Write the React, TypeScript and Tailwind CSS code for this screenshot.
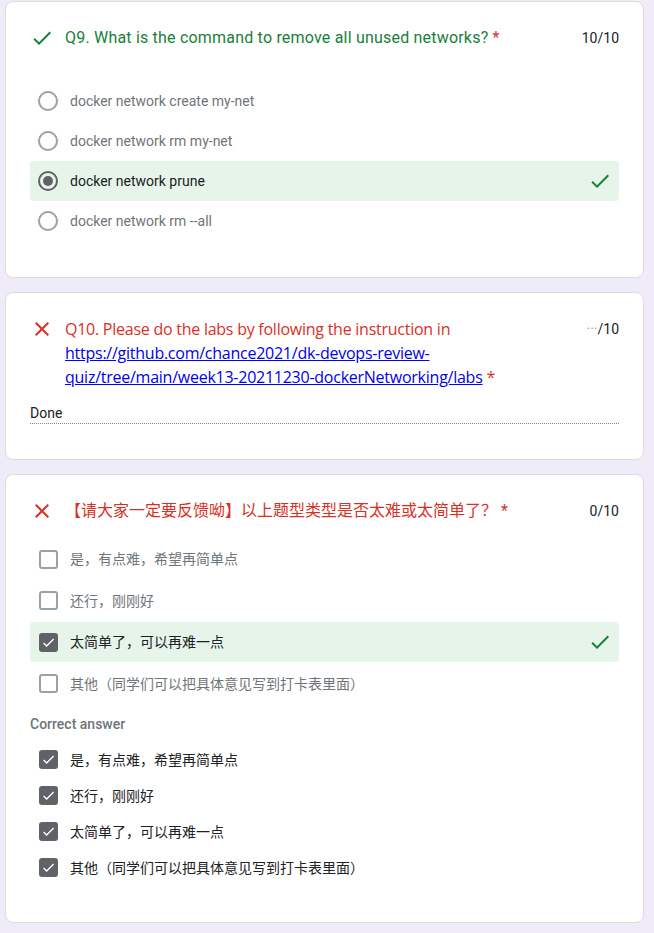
import { ReactNode } from 'react'

const font = { fontFamily: 'Roboto, "Noto Sans CJK SC", sans-serif' }

function CheckIcon({ className }: { className?: string }) {
  return (
    <svg viewBox="0 0 24 24" className={className} fill="currentColor">
      <path d="M9 16.17L4.83 12l-1.42 1.41L9 19 21 7l-1.41-1.41z" />
    </svg>
  )
}

function CloseIcon({ className }: { className?: string }) {
  return (
    <svg viewBox="0 0 24 24" className={className} fill="currentColor">
      <path d="M19 6.41L17.59 5 12 10.59 6.41 5 5 6.41 10.59 12 5 17.59 6.41 19 12 13.41 17.59 19 19 17.59 13.41 12z" />
    </svg>
  )
}

function Radio({ checked }: { checked?: boolean }) {
  return (
    <span
      className={`flex h-5 w-5 shrink-0 items-center justify-center rounded-full border-2 ${
        checked ? 'border-[#5f6368]' : 'border-[#9aa0a6]'
      }`}
    >
      {checked && <span className="h-[10px] w-[10px] rounded-full bg-[#5f6368]" />}
    </span>
  )
}

function Checkbox({ checked }: { checked?: boolean }) {
  if (checked) {
    return (
      <span className="flex h-[19px] w-[19px] shrink-0 items-center justify-center rounded-[3px] bg-[#5f6368]">
        <CheckIcon className="h-[15px] w-[15px] text-white" />
      </span>
    )
  }
  return <span className="h-[19px] w-[19px] shrink-0 rounded-[3px] border-2 border-[#9aa0a6]" />
}

function Option({ control, label, selected }: { control: ReactNode; label: string; selected?: boolean }) {
  return (
    <div className={`flex h-10 items-center rounded-[4px] pl-2 pr-[7px] ${selected ? 'bg-[#e6f4ea]' : ''}`}>
      <span className="flex w-5 justify-center">{control}</span>
      <span className={`ml-3 flex-1 text-sm ${selected ? 'text-[#202124]' : 'text-[#70757a]'}`}>{label}</span>
      {selected && <CheckIcon className="h-6 w-6 text-[#188038]" />}
    </div>
  )
}

function Card({ children }: { children: ReactNode }) {
  return <div className="rounded-lg border border-[#dadce0] bg-white px-6 pt-6">{children}</div>
}

const cjk = ['是，有点难，希望再简单点', '还行，刚刚好', '太简单了，可以再难一点', '其他（同学们可以把具体意见写到打卡表里面）']

export default function App() {
  return (
    <div className="min-h-[933px] bg-[#f0ebf8] pl-[5px] pr-[10px] pt-[1px]" style={font}>
      <div className="flex flex-col gap-[14px]">
        <Card>
          <div className="flex items-start">
            <CheckIcon className="h-6 w-6 shrink-0 text-[#188038]" />
            <div className="ml-[11px] flex-1 text-base leading-6 tracking-[0.2px] text-[#188038]">
              Q9. What is the command to remove all unused networks? <span className="text-[#d93025]">*</span>
            </div>
            <div className="text-sm leading-6 text-[#202124]">10/10</div>
          </div>
          <div className="mt-[31px] pb-9">
            <Option control={<Radio />} label="docker network create my-net" />
            <Option control={<Radio />} label="docker network rm my-net" />
            <Option control={<Radio checked />} label="docker network prune" selected />
            <Option control={<Radio />} label="docker network rm --all" />
          </div>
        </Card>

        <Card>
          <div className="flex items-start">
            <CloseIcon className="h-6 w-6 shrink-0 text-[#d93025]" />
            <div
              className="ml-[11px] flex-1 text-base leading-6 tracking-[-0.25px] text-[#d93025]"
              style={{ fontFamily: '"Open Sans", Roboto, sans-serif' }}
            >
              Q10. Please do the labs by following the instruction in
              <br />
              <a href="#" className="text-[#0000ee] underline">
                https://github.com/chance2021/dk-devops-review-
                <br />
                quiz/tree/main/week13-20211230-dockerNetworking/labs
              </a>{' '}
              *
            </div>
            <div className="text-sm leading-6 text-[#202124]">
              <span className="text-[#9aa0a6]">···</span>/10
            </div>
          </div>
          <div className="mt-[14px] pb-[35px]">
            <div className="border-b border-dotted border-[#80868b] text-sm leading-5 text-[#202124]">Done</div>
          </div>
        </Card>

        <Card>
          <div className="flex items-start">
            <CloseIcon className="h-6 w-6 shrink-0 text-[#d93025]" />
            <div className="ml-[11px] flex-1 text-base leading-6 text-[#d93025]">
              【请大家一定要反馈呦】以上题型类型是否太难或太简单了？ <span className="text-[#d93025]">*</span>
            </div>
            <div className="text-sm leading-6 text-[#202124]">0/10</div>
          </div>
          <div className="mt-4 flex flex-col gap-[1.5px]">
            <Option control={<Checkbox />} label={cjk[0]} />
            <Option control={<Checkbox />} label={cjk[1]} />
            <Option control={<Checkbox checked />} label={cjk[2]} selected />
            <Option control={<Checkbox />} label={cjk[3]} />
          </div>
          <div className="mt-[10px] text-sm font-medium leading-5 text-[#70757a]">Correct answer</div>
          <div className="mt-[8px] flex flex-col pb-[36px]">
            {cjk.map((c) => (
              <div key={c} className="flex h-9 items-center pl-2">
                <span className="flex w-5 justify-center">
                  <Checkbox checked />
                </span>
                <span className="ml-3 text-sm text-[#202124]">{c}</span>
              </div>
            ))}
          </div>
        </Card>
      </div>
    </div>
  )
}
